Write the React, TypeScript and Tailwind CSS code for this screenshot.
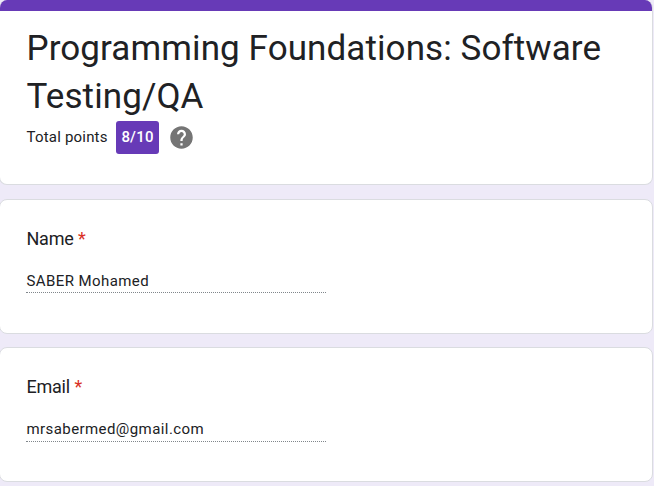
import React from "react";

function Field({ label, value, lineClass }: { label: string; value: string; lineClass: string }) {
  return (
    <section className="-ml-px h-[135px] w-[654px] shrink-0 rounded-lg border border-[#dadce0] bg-white pl-[26px]">
      <h2 className="mt-[27px] pl-[0.5px] text-[18px] leading-6 tracking-[-0.25px] text-[#202124]">
        {label} <span className="ml-[0.4px] text-[#d93025]">*</span>
      </h2>
      <div className={`mt-[17px] w-[300px] border-b border-dotted border-[#80868b] pl-[0.5px] pt-[2px] text-[15px] leading-[22px] tracking-[0.42px] text-[#202124] ${lineClass}`}>
        {value}
      </div>
    </section>
  );
}

export default function App() {
  return (
    <main className="flex h-[486px] w-[654px] flex-col overflow-hidden bg-[#eeeaf8] font-[Roboto,sans-serif]">
      <header className="-ml-px mb-[14px] h-[185px] w-[654px] shrink-0 overflow-hidden rounded-lg border border-t-0 border-[#dadce0] bg-white">
        <div className="h-[11px] bg-[#673ab7]" />
        <div className="pl-[26px] pt-[14px]">
          <h1 className="whitespace-nowrap pl-[0.5px] text-[35px] leading-[48px] tracking-[0.09px] text-[#202124]">
            Programming Foundations: Software
            <br />
            Testing/QA
          </h1>
          <div className="flex h-[33px] items-center text-[15px] tracking-[0.2px] text-[#202124]">
            <span className="w-[90px] pl-[0.5px]">Total points</span>
            <span className="flex h-[33px] w-[43px] items-center justify-center rounded-[3px] bg-[#673ab7] font-medium text-white">8/10</span>
            <svg className="ml-[9px] h-[27px] w-[27px]" viewBox="0 0 24 24" fill="#757575">
              <path d="M12 2C6.48 2 2 6.48 2 12s4.48 10 10 10 10-4.48 10-10S17.52 2 12 2zm1 17h-2v-2h2v2zm2.07-7.75l-.9.92C13.45 12.9 13 13.5 13 15h-2v-.5c0-1.1.45-2.1 1.17-2.83l1.24-1.26c.37-.36.59-.86.59-1.41 0-1.1-.9-2-2-2s-2 .9-2 2H8c0-2.21 1.79-4 4-4s4 1.79 4 4c0 .88-.36 1.68-.93 2.25z" />
            </svg>
          </div>
        </div>
      </header>
      <div className="flex flex-col gap-[13px]">
        <Field label="Name" value="SABER Mohamed" lineClass="h-[25px]" />
        <Field label="Email" value="mrsabermed@gmail.com" lineClass="h-[26px]" />
      </div>
    </main>
  );
}
